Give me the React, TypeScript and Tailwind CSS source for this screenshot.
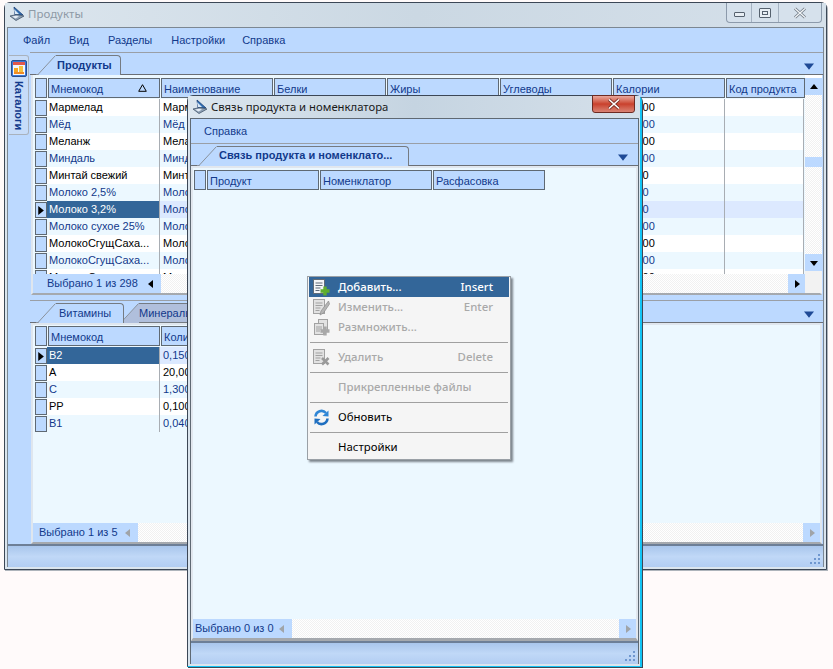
import React from "react";

const HATCH = "bg-[repeating-conic-gradient(#f1f1f1_0_25%,#ffffff_0_50%)] bg-[length:2px_2px]";

function Logo() {
  return (
    <svg width="16" height="16" viewBox="0 0 16 16" className="shrink-0">
      <path d="M5 1 L14 9 L6 9 Z" fill="#2f6fb5" stroke="#1d3f73" strokeWidth="0.8" />
      <path d="M5 3 L10 8 L6 8 Z" fill="#dbe9f7" />
      <path d="M1 10 L8 8.5 L15 10 L7 14.5 Z" fill="#8d9fb3" stroke="#44556b" strokeWidth="0.8" />
      <path d="M3 10.5 L7 9.8 L10 10.5 L6.5 12.5 Z" fill="#e6edf5" />
    </svg>
  );
}

function CatalogIcon() {
  return (
    <svg width="16" height="17" viewBox="0 0 16 17" className="shrink-0">
      <rect x="0.5" y="0.5" width="15" height="16" rx="1.5" fill="#3b78d8" stroke="#2a4f8f" />
      <rect x="2" y="2" width="12" height="13" fill="#f3f6fb" />
      <rect x="2" y="2" width="12" height="3" fill="#e2574c" />
      <rect x="3" y="8" width="4" height="4" fill="#f5a623" />
      <rect x="8" y="6" width="4" height="6" fill="#f5c242" />
      <rect x="3" y="12" width="10" height="2" fill="#f08a24" />
    </svg>
  );
}

function Tri({ dir, color = "#000", size = 8 }: { dir: "up" | "down" | "left" | "right"; color?: string; size?: number }) {
  const d = { up: "M0 6 L4 1 L8 6 Z", down: "M0 2 L8 2 L4 7 Z", left: "M6 0 L6 8 L1 4 Z", right: "M2 0 L2 8 L7 4 Z" }[dir];
  return (
    <svg width={size} height={size} viewBox="0 0 8 8" className="shrink-0">
      <path d={d} fill={color} />
    </svg>
  );
}

function Tab({ label, bold, width, active = true, textPad = 0, lift = 0, className = "" }: { label: string; bold?: boolean; width: number; active?: boolean; textPad?: number; lift?: number; className?: string }) {
  return (
    <div className={`flex h-[20px] shrink-0 ${className}`} style={{ width }}>
      <svg width="20" height="20" viewBox="0 0 20 20" className="shrink-0">
        <path d="M0 20 L2 20 L19 1 L20 0 L20 20 Z" fill={active ? "#bcd9ff" : "#b0bfdc"} />
        <path d="M0 19.5 L2 19.5 L19.5 0.5" fill="none" stroke="#8a929c" />
      </svg>
      <div
        className={`flex-1 flex items-center border-t border-r border-[#757b82] rounded-tr-[4px] min-w-0 overflow-hidden whitespace-nowrap ${active ? "bg-[#bcd9ff]" : "bg-[#b0bfdc] border-b"} ${bold ? "font-bold" : ""} text-[#12398b]`}
        style={{ paddingLeft: textPad, paddingBottom: lift }}
      >
        {label}
      </div>
    </div>
  );
}

function Strip({ children, compact }: { children: React.ReactNode; compact?: boolean }) {
  return (
    <div className="h-[23px] shrink-0 flex items-end border-t border-[#9a9fa6] bg-[#bcd9ff] shadow-[inset_0_-1px_0_#6a6f76] relative pl-[6px]">
      {children}
      <div className={`absolute top-[8px] ${compact ? "right-[10px]" : "right-[9px]"}`}>
        <Tri dir="down" color="#1f4a96" size={10} />
      </div>
    </div>
  );
}

function HeaderCell({ label, width = 112, sort }: { label: string; width?: number; sort?: boolean }) {
  return (
    <div
      className="h-[20px] shrink-0 border border-[#5f6973] bg-[#bcd9ff] text-[#12398b] pl-[2px] flex items-center justify-between overflow-hidden whitespace-nowrap"
      style={{ width }}
    >
      <span className="pt-[2px]">{label}</span>
      {sort && (
        <svg width="9" height="8" viewBox="0 0 9 8" className="mr-[12px] shrink-0">
          <path d="M4.5 0.7 L8.3 7.3 L0.7 7.3 Z" fill="none" stroke="#000" />
        </svg>
      )}
    </div>
  );
}

function Selector({ current }: { current?: boolean }) {
  return (
    <div className="w-[12px] h-[16px] shrink-0 border border-[#5f6973] bg-[#bcd9ff] flex items-center">
      {current && <Tri dir="right" size={9} />}
    </div>
  );
}

type RowData = { cells: string[]; selected?: boolean };

function DataRow({ row, tinted, widths }: { row: RowData; tinted: boolean; widths: number[] }) {
  const textColor = tinted || row.selected ? "text-[#12398b]" : "text-black";
  const rowBg = row.selected ? "bg-[#dce9ff]" : tinted ? "bg-[#ecf8ff]" : "bg-white";
  return (
    <div className={`flex w-fit h-[17px] shrink-0 items-center ${rowBg} ${textColor}`}>
      <div className="w-[14px] h-[17px] shrink-0 flex items-end pl-[2px] bg-[#ecf8ff]">
        <Selector current={row.selected} />
      </div>
      {widths.map((w, i) => (
        <div
          key={i}
          className={`h-[17px] shrink-0 whitespace-nowrap overflow-hidden border-r border-[#a8adb3] flex items-center ${row.selected && i === 0 ? "bg-[#336699] text-white" : ""} ${i > 0 ? "pl-[3px]" : "pl-[2px]"}`}
          style={{ width: w }}
        >
          {row.cells[i] ?? ""}
        </div>
      ))}
    </div>
  );
}

const productRows: RowData[] = [
  ["Мармелад", "293,000"],
  ["Мёд", "328,000"],
  ["Меланж", "157,000"],
  ["Миндаль", "645,000"],
  ["Минтай свежий", "72,000"],
  ["Молоко 2,5%", "54,000"],
  ["Молоко 3,2%", "58,000"],
  ["Молоко сухое 25%", "475,000"],
  ["МолокоСгущСаха...", "320,000"],
  ["МолокоСгущСаха...", "320,000"],
  ["МолокоСгущ", "320,000"],
].map(([name, kcal], i) => ({
  cells: [name, name, "", "", "", kcal, ""],
  selected: i === 6,
}));

const vitaminRows: RowData[] = [
  { cells: ["B2", "0,150"], selected: true },
  { cells: ["A", "20,00"] },
  { cells: ["C", "1,300"] },
  { cells: ["PP", "0,100"] },
  { cells: ["B1", "0,040"] },
];

const topWidths = [113, 113, 113, 113, 113, 113, 79];
const lowWidths = [113, 113, 113];

function StatusLabel({ text, width, pad, arrowGray }: { text: string; width: number; pad: number; arrowGray?: boolean }) {
  return (
    <div className="h-[19px] shrink-0 bg-[#bcd9ff] text-[#12398b] flex items-center justify-between pr-[6px] whitespace-nowrap" style={{ width, paddingLeft: pad }}>
      <span>{text}</span>
      <Tri dir="left" color={arrowGray ? "#a0a4a8" : "#000"} />
    </div>
  );
}

function ScrollBtn({ dir, gray }: { dir: "up" | "down" | "left" | "right"; gray?: boolean }) {
  return (
    <div className="w-[17px] h-[19px] shrink-0 bg-[#bcd9ff] flex items-center justify-center">
      <Tri dir={dir} color={gray ? "#a0a4a8" : "#000"} />
    </div>
  );
}

function Grip() {
  const dots = [[9, 1], [9, 5], [5, 5], [9, 9], [5, 9], [1, 9]];
  return (
    <svg width="12" height="12" viewBox="0 0 12 12" className="shrink-0">
      {dots.map(([x, y], i) => (
        <rect key={i} x={x} y={y} width="2" height="2" fill="#6f97cf" />
      ))}
    </svg>
  );
}

function StatusBar() {
  return (
    <div className="h-[23px] shrink-0 border-t-2 border-[#6d7f97] bg-gradient-to-b from-[#a9c6ec] via-[#c0d8f7] to-[#b2cdf2] flex items-end justify-end pr-[2px] pb-[2px]">
      <Grip />
    </div>
  );
}

function MenuIcon({ kind }: { kind: "add" | "edit" | "copy" | "del" | "refresh" }) {
  if (kind === "refresh") {
    return (
      <svg width="17" height="17" viewBox="0 0 17 17" className="shrink-0">
        <path d="M2.5 7.5 A6 6 0 0 1 13 4" fill="none" stroke="#2f86d6" strokeWidth="2.6" />
        <path d="M15.5 1.5 L15.5 7.5 L9.5 7 Z" fill="#2f86d6" />
        <path d="M14.5 9.5 A6 6 0 0 1 4 13" fill="none" stroke="#1f6fc0" strokeWidth="2.6" />
        <path d="M1.5 15.5 L1.5 9.5 L7.5 10 Z" fill="#1f6fc0" />
      </svg>
    );
  }
  const active = kind === "add";
  const page = active ? "#f4f6f8" : "#e2e2e2";
  const line = active ? "#5f6b78" : "#a2a2a2";
  return (
    <svg width="17" height="17" viewBox="0 0 17 17" className="shrink-0">
      {kind === "copy" && <rect x="5.5" y="0.5" width="9" height="11" fill={page} stroke={line} />}
      <rect x={kind === "copy" ? 1.5 : 0.5} y={kind === "copy" ? 4.5 : 0.5} width={kind === "copy" ? 9 : 11} height={kind === "copy" ? 11 : 14} fill={page} stroke={line} />
      <path d={kind === "copy" ? "M3 8h6M3 10h6M3 12h4" : "M2.5 4h7M2.5 6.5h7M2.5 9h5M2.5 11.5h4"} stroke={line} strokeWidth="1" />
      {kind === "add" && <path d="M12 7.5v9M7.5 12h9" stroke="#5fae2e" strokeWidth="3.4" />}
      {kind === "copy" && <path d="M12 7.5v9M7.5 12h9" stroke="#a8a8a8" strokeWidth="3.4" />}
      {kind === "edit" && <path d="M15.5 2 L8 12 L7 16 L10.5 14 L16.5 5 Z" fill="#b5b5b5" stroke="#8d8d8d" strokeWidth="0.7" />}
      {kind === "del" && <path d="M9 9 L15.5 15.5 M15.5 9 L9 15.5" stroke="#9a9a9a" strokeWidth="2.6" />}
    </svg>
  );
}

function MenuItem({ icon, label, shortcut, active, disabled }: { icon?: "add" | "edit" | "copy" | "del" | "refresh"; label: string; shortcut?: string; active?: boolean; disabled?: boolean }) {
  const color = active ? "text-white bg-[#336699]" : disabled ? "text-[#a9a9a9]" : "text-black";
  return (
    <div className={`h-[20px] flex items-center pr-[16px] ${color}`}>
      <div className="w-[29px] pl-[4px] flex justify-start shrink-0">{icon && <MenuIcon kind={icon} />}</div>
      <span className={`flex-1 ${active || disabled ? "font-medium" : ""}`}>{label}</span>
      {shortcut && <span className="font-medium">{shortcut}</span>}
    </div>
  );
}

function Sep() {
  return <div className="h-[10px] flex items-center px-[1px]"><div className="h-px w-full bg-[#a0a0a0]" /></div>;
}

export default function App() {
  return (
    <div className="relative w-[833px] h-[669px] overflow-hidden bg-[#fffafa] text-[11px] font-['Liberation_Sans','Noto_Sans',sans-serif]">
      {/* Main window */}
      <div className="absolute left-[4px] top-[2px] w-[823px] h-[568px] rounded-t-[6px] border border-[#3c4756] shadow-[1px_1px_0_#aeb4bb] bg-[#dbe5ee] flex flex-col px-[2px] pb-[2px]">
        <div className="h-[24px] shrink-0 flex items-start pt-[3px] pl-[4px] gap-[3px] bg-gradient-to-r from-[#dce6ee] via-[#cbd8e3] to-[#d5e0ea] -mx-[2px] relative">
          <Logo />
          <span className="text-[11.5px] text-[#8e9aa6] font-['Noto_Sans',sans-serif] leading-[16px]">Продукты</span>
          <div className="absolute right-[4px] top-0 w-[96px] h-[20px] flex border border-t-0 border-[#8c9aab] rounded-b-[4px] bg-[#d6e1ec]">
            <div className="w-[25px] border-r border-[#a5b2c1] flex items-center justify-center">
              <div className="w-[11px] h-[5px] border border-[#56616e] mt-[4px] bg-[#e8eef4] rounded-[1px]" />
            </div>
            <div className="w-[27px] border-r border-[#a5b2c1] flex items-center justify-center">
              <div className="w-[12px] h-[10px] border border-[#56616e] flex items-center justify-center bg-[#e8eef4] rounded-[1px]">
                <div className="w-[6px] h-[4px] border border-[#56616e]" />
              </div>
            </div>
            <div className="flex-1 flex items-center justify-center">
              <svg width="14" height="12" viewBox="0 0 14 12">
                <path d="M2 1.5 L12 10.5 M12 1.5 L2 10.5" stroke="#6d7782" strokeWidth="3" />
                <path d="M2 1.5 L12 10.5 M12 1.5 L2 10.5" stroke="#f2f5f8" strokeWidth="1.4" />
              </svg>
            </div>
          </div>
        </div>

        <div className="flex-1 flex flex-col min-h-0 border-x border-t border-[#7c8792] bg-[#bcd9ff]">
          <div className="h-[24px] shrink-0 flex items-center pl-[15px] text-[#12398b] whitespace-nowrap">
            <span className="mr-[19px]">Файл</span>
            <span className="mr-[19px]">Вид</span>
            <span className="mr-[19px]">Разделы</span>
            <span className="mr-[17px]">Настройки</span>
            <span>Справка</span>
          </div>

          <div className="flex-1 flex min-h-0">
            <div className="w-[22px] shrink-0 pt-[3px] pl-[1px]">
              <div className="w-[20px] h-[80px] border border-l-0 border-[#a9b2bd] rounded-r-[3px] bg-[#c6dcf9] flex flex-col items-center pt-[4px] gap-[4px]">
                <CatalogIcon />
                <span className="[writing-mode:vertical-rl] font-bold text-[#12398b]">Каталоги</span>
              </div>
            </div>

            <div className="flex-1 min-w-0 flex flex-col">
              <Strip>
                <Tab label="Продукты" bold width={85} textPad={1} />
              </Strip>
              <div className="h-[220px] shrink-0 ml-[1px] mr-[1px] border-l-2 border-r-2 border-b-2 border-l-[#dfe6ee] border-r-[#dfe6ee] border-b-[#a5a9ae] flex bg-white">
                <div className="w-[772px] shrink-0 flex flex-col min-w-0">
                  <div className="flex-1 min-h-0 overflow-hidden flex flex-col bg-[#ecf8ff]">
                    <div className="flex gap-[1px] pt-[3px] pl-[2px] shrink-0 bg-[#ecf8ff] h-[24px]">
                      <div className="w-[12px] h-[20px] border border-[#5f6973] bg-[#bcd9ff] shrink-0" />
                      <HeaderCell label="Мнемокод" sort />
                      <HeaderCell label="Наименование" />
                      <HeaderCell label="Белки" />
                      <HeaderCell label="Жиры" />
                      <HeaderCell label="Углеводы" />
                      <HeaderCell label="Калории" />
                      <HeaderCell label="Код продукта" width={79} />
                    </div>
                    {productRows.map((r, i) => (
                      <DataRow key={i} row={r} tinted={i % 2 === 1} widths={topWidths} />
                    ))}
                  </div>
                  <div className="flex h-[19px] shrink-0">
                    <StatusLabel text="Выбрано 1 из 298" width={128} pad={14} />
                    <div className={`flex-1 ${HATCH}`} />
                    <ScrollBtn dir="right" />
                  </div>
                </div>
                <div className={`w-[17px] shrink-0 flex flex-col ${HATCH}`}>
                  <div className="h-[3px] bg-white" />
                  <div className="h-[17px] bg-[#bcd9ff] flex items-center justify-center"><Tri dir="up" /></div>
                  <div className="h-[62px]" />
                  <div className="h-[10px] bg-[#bcd9ff]" />
                  <div className="h-[87px]" />
                  <div className="h-[17px] bg-[#bcd9ff] flex items-center justify-center"><Tri dir="down" /></div>
                  <div className="flex-1 bg-[#f2f2f2]" />
                </div>
              </div>
              <div className="h-[5px] shrink-0 bg-[#bcd9ff]" />
              <Strip>
                <Tab label="Витамины" width={88} textPad={3} className="relative z-10" />
                <Tab label="Минералы" width={90} active={false} textPad={0} className="-ml-[5px]" />
              </Strip>
              <div className="flex-1 min-h-0 ml-[1px] mr-[1px] border-l-2 border-r-2 border-b-2 border-t-2 border-l-[#dfe6ee] border-r-[#dfe6ee] border-t-[#dfe6ee] border-b-[#a5a9ae] flex flex-col bg-[#ecf8ff]">
                <div className="flex-1 min-h-0 overflow-hidden flex flex-col">
                  <div className="flex gap-[1px] pt-[1px] pl-[2px] h-[22px] shrink-0">
                    <div className="w-[12px] h-[20px] border border-[#5f6973] bg-[#bcd9ff] shrink-0" />
                    <HeaderCell label="Мнемокод" />
                    <HeaderCell label="Количество" />
                  </div>
                  {vitaminRows.map((r, i) => (
                    <DataRow key={i} row={r} tinted={i % 2 === 0} widths={lowWidths} />
                  ))}
                </div>
                <div className="flex h-[19px] shrink-0">
                  <StatusLabel text="Выбрано 1 из 5" width={105} pad={6} arrowGray />
                  <div className={`flex-1 ${HATCH}`} />
                  <ScrollBtn dir="right" gray />
                </div>
              </div>
            </div>
          </div>
          <StatusBar />
        </div>
      </div>

      {/* Dialog */}
      <div className="absolute left-[187px] top-[95px] w-[455px] h-[572px] rounded-t-[6px] border-l border-t border-b border-[#3c4756] border-r-2 border-r-[#12c4f5] border-b-[#12c4f5] shadow-[1px_1px_0_#3c4756] bg-[#dbe5ee] flex flex-col pl-[2px] pr-[1px] pb-[2px]">
        <div className="h-[22px] shrink-0 flex items-start pt-[3px] pl-[4px] gap-[3px] bg-gradient-to-r from-[#dce6ee] via-[#c5d4e1] to-[#d5e0ea] -ml-[2px] -mr-[1px] relative">
          <Logo />
          <span className="text-[11.3px] text-[#1a1a1a] font-['Noto_Sans',sans-serif] leading-[16px]">Связь продукта и номенклатора</span>
          <div className="absolute right-[5px] -top-px w-[43px] h-[18px] border border-[#6d2a22] rounded-b-[3px] bg-gradient-to-b from-[#e8a79c] via-[#c9402c] to-[#d98273] flex items-center justify-center">
            <svg width="14" height="12" viewBox="0 0 14 12">
              <path d="M2 1.5 L12 10.5 M12 1.5 L2 10.5" stroke="#7a3028" strokeWidth="3.2" />
              <path d="M2 1.5 L12 10.5 M12 1.5 L2 10.5" stroke="#ffffff" strokeWidth="1.6" />
            </svg>
          </div>
        </div>
        <div className="flex-1 min-h-0 flex flex-col border-x border-t border-[#5f6973] bg-[#bcd9ff]">
          <div className="h-[24px] shrink-0 flex items-center pl-[13px] text-[#12398b]">Справка</div>
          <Strip compact>
            <Tab label="Связь продукта и номенклато..." bold width={212} textPad={2} lift={2} />
          </Strip>
          <div className="flex-1 min-h-0 border-x-2 border-t-2 border-b-[3px] border-x-[#e1e7ee] border-t-[#e1e7ee] border-b-[#a5a9ae] bg-[#ecf8ff] flex flex-col">
            <div className="flex-1 min-h-0">
              <div className="flex gap-[1px] pt-[2px] pl-[1px]">
                <div className="w-[12px] h-[20px] border border-[#5f6973] bg-[#bcd9ff] shrink-0" />
                <HeaderCell label="Продукт" />
                <HeaderCell label="Номенклатор" />
                <HeaderCell label="Расфасовка" />
              </div>
            </div>
            <div className="flex h-[19px] shrink-0">
              <StatusLabel text="Выбрано 0 из 0" width={99} pad={2} arrowGray />
              <div className={`flex-1 ${HATCH}`} />
              <ScrollBtn dir="right" gray />
            </div>
          </div>
          <StatusBar />
        </div>
      </div>

      {/* Context menu */}
      <div className="absolute left-[307px] top-[276px] w-[204px] bg-[#f5f5f5] border border-[#9aa0a6] px-[1px] pb-[2px] shadow-[2px_2px_2px_#7d858d] text-[11.4px] font-['Noto_Sans',sans-serif]">
        <MenuItem icon="add" label="Добавить..." shortcut="Insert" active />
        <MenuItem icon="edit" label="Изменить..." shortcut="Enter" disabled />
        <MenuItem icon="copy" label="Размножить..." disabled />
        <Sep />
        <MenuItem icon="del" label="Удалить" shortcut="Delete" disabled />
        <Sep />
        <MenuItem label="Прикрепленные файлы" disabled />
        <Sep />
        <MenuItem icon="refresh" label="Обновить" />
        <Sep />
        <MenuItem label="Настройки" />
      </div>
    </div>
  );
}
